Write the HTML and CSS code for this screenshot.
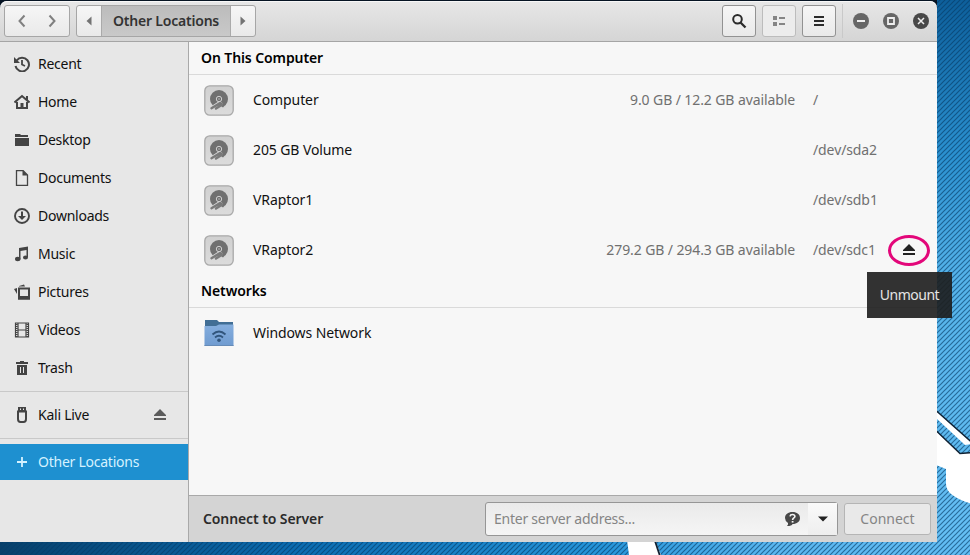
FILE: index.html
```html
<!DOCTYPE html>
<html lang="en">
<head>
<meta charset="utf-8">
<title>Other Locations</title>
<link rel="stylesheet" href="styles.css">
</head>
<body>
<svg class="wallpaper" width="970" height="555" viewBox="0 0 970 555" aria-hidden="true">
  <defs>
    <linearGradient id="side" x1="0" y1="0" x2="0" y2="1"><stop offset="0" stop-color="#0d5f9b"/><stop offset=".28" stop-color="#2b91d0"/><stop offset=".5" stop-color="#55b3ea"/><stop offset="1" stop-color="#66c0f5"/></linearGradient>
    <linearGradient id="base" x1="0" y1="0" x2="1" y2="0"><stop offset="0" stop-color="#07406b"/><stop offset=".3" stop-color="#0a6bb0"/><stop offset=".62" stop-color="#2595da"/><stop offset=".8" stop-color="#5ab7f0"/><stop offset="1" stop-color="#62bdf4"/></linearGradient>
    <pattern id="hatch" width="5" height="5" patternUnits="userSpaceOnUse"><path d="M-1 1L1-1M0 5L5 0M4 6L6 4" stroke="#053a66" stroke-opacity=".62" stroke-width="1.2"/></pattern>
  </defs>
  <rect x="930" width="40" height="555" fill="url(#side)"/>
  <rect y="540" width="970" height="15" fill="url(#base)"/>
  <rect width="970" height="555" fill="url(#hatch)"/>
  <rect width="937" height="8" fill="#061423"/>
  <path d="M936 411L972 443V444L965 445L936 418Z" fill="#fff"/>
  <path d="M936 410.500L972 442.500" fill="none" stroke="#123" stroke-width="1.5"/>
  <path d="M936 431L960 453.500L972 452.500V504C956 499 946 493 946 484V469L936 465Z" fill="#fff"/>
  <path d="M936 430.500L960 453.500L972 452.500" fill="none" stroke="#123" stroke-width="1.500"/>
  <path d="M627 540H655L661 555H629Z" fill="#fff"/>
  <path d="M655 541L660 556" stroke="#123" stroke-width="1.800"/>
</svg>

<svg width="0" height="0" class="defs" aria-hidden="true">
  <defs>
    <linearGradient id="metal" x1="0" y1="0" x2="0" y2="1"><stop offset="0" stop-color="#d0d0d0"/><stop offset="1" stop-color="#dcdcdc"/></linearGradient>
    <linearGradient id="blue" x1="0" y1="0" x2="0" y2="1"><stop offset="0" stop-color="#85aede"/><stop offset="1" stop-color="#6f9bd0"/></linearGradient>
    <symbol id="drive" viewBox="0 0 30 31">
      <rect x=".8" y=".8" width="28.4" height="29.4" rx="5" fill="url(#metal)" stroke="#a9a9a9" stroke-width="1.3"/>
      <circle cx="15" cy="14" r="9" fill="#707070"/>
      <path d="M6 22L16 15.500L22 22L12 25Z" fill="#d5d5d5"/>
      <path d="M11 20.500L16 17.500Q21 19.500 22.500 18.500L19 22.500L17 21Z" fill="#707070"/>
      <path d="M7.500 23.200L16.500 17.800M12 23.500L18 19.800" stroke="#7a7a7a" stroke-width="2.400" stroke-linecap="round"/>
      <circle cx="15" cy="14" r="2.700" fill="#707070" stroke="#d0d0d0" stroke-width="1"/>
      <circle cx="15" cy="14" r=".7" fill="#d0d0d0"/>
    </symbol>
    <symbol id="eject" viewBox="0 0 14 12"><path d="M7 0L13 6V7H1V6ZM1 9H13V11H1Z" fill="currentColor"/></symbol>
  </defs>
</svg>

<main class="window">
  <header class="bar">
    <div class="group nav">
      <button><svg width="16" height="16"><path d="M10.500 2.500L5.500 8L10.500 13.500" fill="none" stroke="#808080" stroke-width="2"/></svg></button>
      <button><svg width="16" height="16"><path d="M5.500 2.500L10.500 8L5.500 13.500" fill="none" stroke="#808080" stroke-width="2"/></svg></button>
    </div>
    <div class="group path">
      <button class="arrow"><svg width="8" height="10"><path d="M6.500 .5V9.500L1.500 5Z" fill="#737373"/></svg></button>
      <button class="crumb"><span>Other Locations</span></button>
      <button class="arrow"><svg width="8" height="10"><path d="M1.500 .5V9.500L6.500 5Z" fill="#737373"/></svg></button>
    </div>
    <div class="actions">
      <button class="tool"><svg width="16" height="16"><circle cx="6.500" cy="6.300" r="4.300" fill="none" stroke="#2b2b2b" stroke-width="2"/><path d="M9.500 9.500L14.500 14.500" stroke="#2b2b2b" stroke-width="2.300"/></svg></button>
      <button class="tool off"><svg width="16" height="16"><path d="M2 3H6V7H2ZM2 9H6V13H2ZM8 4H14V6H8ZM8 10H14V12H8Z" fill="#858585"/></svg></button>
      <button class="tool"><svg width="16" height="16"><path d="M3 3H13V5H3ZM3 7H13V9H3ZM3 11H13V13H3Z" fill="#2b2b2b"/></svg></button>
      <i class="split"></i>
      <div class="controls">
        <svg width="16" height="16"><circle cx="8" cy="8" r="8" fill="#666"/><path d="M4 8H12" stroke="#eee" stroke-width="2"/></svg>
        <svg width="16" height="16"><circle cx="8" cy="8" r="8" fill="#666"/><path d="M5 5H11V11H5Z" fill="none" stroke="#eee" stroke-width="1.800"/></svg>
        <svg width="16" height="16"><circle cx="8" cy="8" r="8" fill="#484848"/><path d="M5 5L11 11M11 5L5 11" stroke="#eee" stroke-width="1.500"/></svg>
      </div>
    </div>
  </header>
  <div class="body">
    <nav class="sidebar">
      <a><svg width="16" height="16"><path d="M2.700 4.500A6.800 6.800 0 1 1 1.500 10" fill="none" stroke="#444" stroke-width="2"/><path d="M0 1V7H6L4 5L3 4Z" fill="#444"/><path d="M8 4V8.500L11 10" fill="none" stroke="#444" stroke-width="1.800"/></svg><span>Recent</span></a>
      <a><svg width="16" height="16"><path d="M.5 8.500L8 2L15.500 8.500M3 8V14H13V8" fill="none" stroke="#444" stroke-width="2"/><path d="M6.500 9H9.500V15H6.500ZM12 2H14V7L12 5Z" fill="#444"/></svg><span>Home</span></a>
      <a><svg width="16" height="16"><path d="M1 2H6L7 3H14V5H1ZM1 6H15V14H1Z" fill="#444"/></svg><span>Desktop</span></a>
      <a><svg width="16" height="16"><path d="M2.500 .5H9L13.500 5V15.500H2.500Z" fill="none" stroke="#444" stroke-width="1.300"/><path d="M8.500 0L14 5.500H8.500Z" fill="#444"/></svg><span>Documents</span></a>
      <a><svg width="16" height="16"><circle cx="8" cy="8" r="7" fill="none" stroke="#444" stroke-width="1.900"/><path d="M7 3.500H9V8H12L8 12L4 8H7Z" fill="#444"/></svg><span>Downloads</span></a>
      <a><svg width="16" height="16"><path d="M5 2L14 .5V11H12.500V4L6.500 5V13.500H5Z" fill="#444"/><ellipse cx="3.700" cy="13" rx="2.700" ry="2.200" fill="#444"/><ellipse cx="11.500" cy="11.500" rx="2.500" ry="2.100" fill="#444"/></svg><span>Music</span></a>
      <a><svg width="16" height="16"><path d="M5 4.500H15V14.500H5Z" fill="none" stroke="#444" stroke-width="2"/><path d="M4 12H16V15.500H4ZM5 2L10 .5L11 2.500H5ZM3 4V10L0 5Z" fill="#444"/></svg><span>Pictures</span></a>
      <a><svg width="16" height="16"><path d="M1.500 1H14.500V15H1.500ZM4 1V15M12 1V15M4 8H12" fill="none" stroke="#444" stroke-width="1.200"/><path d="M2.800 2V15M13.200 2V15" stroke="#444" stroke-width="1.800" stroke-dasharray="1 1"/></svg><span>Videos</span></a>
      <a><svg width="16" height="16"><path fill-rule="evenodd" d="M2 2H6V1H10V2H14V4H2ZM3 5H13V15H3ZM6 7V13H7V7ZM9 7V13H10V7Z" fill="#444"/></svg><span>Trash</span></a>
      <hr>
      <a class="kali"><svg width="16" height="16"><path d="M4 4.500H12V12Q12 15 9.500 15H6.500Q4 15 4 12Z" fill="none" stroke="#444" stroke-width="2"/><path fill-rule="evenodd" d="M4 0H12V5H4ZM6 1.500V3H7V1.500ZM9 1.500V3H10V1.500Z" fill="#444"/></svg><span>Kali Live</span><svg class="out" width="14" height="12"><use href="#eject"/></svg></a>
      <hr>
      <a class="active"><svg width="16" height="16"><path d="M8 3V13M3 8H13" stroke="#d5f2ff" stroke-width="1.800"/></svg><span>Other Locations</span></a>
    </nav>
    <section class="content">
      <h2><span>On This Computer</span></h2>
      <div class="row"><svg class="pic" width="30" height="31"><use href="#drive"/></svg><span class="name">Computer</span><span class="space">9.0 GB / 12.2 GB available</span><span class="mount">/</span></div>
      <div class="row"><svg class="pic" width="30" height="31"><use href="#drive"/></svg><span class="name">205 GB Volume</span><span class="space"></span><span class="mount">/dev/sda2</span></div>
      <div class="row"><svg class="pic" width="30" height="31"><use href="#drive"/></svg><span class="name">VRaptor1</span><span class="space"></span><span class="mount">/dev/sdb1</span></div>
      <div class="row"><svg class="pic" width="30" height="31"><use href="#drive"/></svg><span class="name">VRaptor2</span><span class="space">279.2 GB / 294.3 GB available</span><span class="mount">/dev/sdc1</span>
        <div class="unmount"><svg width="14" height="12"><use href="#eject"/></svg><div class="tooltip"><span>Unmount</span></div></div>
      </div>
      <h2><span>Networks</span></h2>
      <div class="row"><svg class="pic" width="30" height="27" viewBox="0 0 30 27"><path d="M1 0H13L15 2H29V8H1Z" fill="#416e95"/><path d="M.5 6H12L15 4.500H29.500V26H.5Z" fill="url(#blue)"/><path d="M.5 25.500H29.500" stroke="#668bb7"/><path d="M8.500 14.500Q15 8.500 21.500 14.500M11 17.500Q15 14 19 17.500" fill="none" stroke="#31557c" stroke-width="1.800"/><circle cx="15" cy="20.300" r="1.800" fill="#31557c"/></svg><span class="name">Windows Network</span></div>
      <footer>
        <strong>Connect to Server</strong>
        <div class="entry"><span>Enter server address...</span><svg width="17" height="16"><path d="M8.500 1C13 1 16 3.500 16 7S13 13 8.500 13Q8 15 3 15Q4.500 13.500 4 12Q1 10 1 7C1 3.500 4 1 8.500 1Z" fill="#484848"/><path d="M6 5.300Q6.300 3.500 8.500 3.500T10.900 5.400C10.900 7 8.600 7 8.600 9" fill="none" stroke="#f4f4f4" stroke-width="1.600"/><path d="M7.700 10H9.500V11.600H7.700Z" fill="#f4f4f4"/></svg><div class="drop"><svg width="10" height="6"><path d="M0 .5H10L5 5.500Z" fill="#222"/></svg></div></div>
        <button class="connect"><span>Connect</span></button>
      </footer>
    </section>
  </div>
</main>
</body>
</html>
```
FILE: styles.css
```css
* { box-sizing: border-box; }
body { margin: 0; width: 970px; height: 555px; overflow: hidden; font: 14px/20px "Noto Sans", "Open Sans", sans-serif; letter-spacing: -.1px; color: #111; }
.wallpaper { position: absolute; inset: 0; }
.defs { position: absolute; }
svg { display: block; flex: none; }
button { font: inherit; letter-spacing: inherit; padding: 0; margin: 0; border: 0; background: none; color: inherit; display: flex; align-items: center; justify-content: center; }
.window { position: relative; width: 937px; height: 542px; padding-top: 1px; display: flex; flex-direction: column; }
.window::before { content: ""; position: absolute; inset: 1px 0 0; z-index: -1; border-radius: 7px 7px 0 0; box-shadow: 0 1px 4px 1px rgba(0,0,0,.5); }
.bar { height: 41px; flex: none; display: flex; align-items: center; gap: 6px; padding: 0 8px 1px 4px; border-radius: 7px 7px 0 0; border-bottom: 1px solid #a5a5a5; background: linear-gradient(#e7e7e7, #d5d5d5); box-shadow: inset 0 1px #f7f7f7; }
.group, .tool { height: 32px; border: 1px solid #a6a6a6; border-radius: 3px; background: linear-gradient(#f6f6f6, #e9e9e9); }
.group { display: flex; overflow: hidden; }
.nav { width: 66px; justify-content: space-between; padding: 0 9px; }
.path { width: 180px; }
.arrow { width: 24px; }
.crumb { flex: 1; background: linear-gradient(#bcbcbc, #c9c9c9); border: 1px solid #aaa; border-width: 0 1px; font-weight: 600; letter-spacing: -.2px; color: #333; }
.actions { margin-left: auto; display: flex; align-items: center; }
.tool { width: 34px; margin-right: 6px; border-color: #929292; }
.tool.off { border-color: #bcbcbc; background: #ececec; }
.split { width: 1px; height: 34px; background: #c9c9c9; }
.controls { display: flex; gap: 14px; margin-left: 10px; }
.body { flex: 1; display: flex; min-height: 0; }
.sidebar { width: 189px; background: #e7e7e7; border-right: 1px solid #a9a9a9; padding-top: 3px; letter-spacing: -.25px; }
.sidebar a { height: 38px; display: flex; align-items: center; gap: 8px; padding-left: 14px; }
.sidebar hr { height: 1px; margin: 4px 0; border: 0; background: #c9c9c9; }
.sidebar .kali { height: 38px; }
.sidebar .active { height: 36px; margin-top: 5px; background: #1e90d0; color: #d5f2ff; }
.out { margin-left: auto; margin-right: 21px; color: #5c5c5c; }
.content { flex: 1; display: flex; flex-direction: column; background: #f7f7f7; min-width: 0; }
h2 { height: 33px; margin: 0; padding: 6px 12px; border-bottom: 1px solid #dadada; font-size: 14px; line-height: 20px; font-weight: 600; color: #000; }
.row { height: 50px; display: flex; align-items: center; padding-left: 15px; }
.pic { margin-right: 19px; }
.name { flex: 1; }
.space, .mount { color: #707070; }
.mount { width: 124px; margin-left: 18px; }
.unmount { position: relative; width: 42px; height: 31px; margin: 0 7px 0 -49px; display: flex; align-items: center; justify-content: center; border: 3px solid #e3077a; border-radius: 50%; color: #222; }
.tooltip { position: absolute; left: -24px; top: 34px; width: 85px; height: 46px; background: rgba(30,30,30,.91); color: #e5e5e5; letter-spacing: -.5px; display: flex; align-items: center; justify-content: center; }
footer { margin-top: auto; height: 47px; flex: none; background: #d4d4d4; border-top: 1px solid #a9a9a9; display: flex; align-items: center; padding: 0 6px 0 14px; }
footer strong { flex: 1; font-weight: 600; color: #2b2b2b; }
.entry { width: 353px; height: 34px; display: flex; align-items: center; padding-left: 8px; border: 1px solid #969696; border-radius: 3px; background: linear-gradient(#eaeaea, #f5f5f5); color: #858585; letter-spacing: -.25px; }
.entry > span { flex: 1; }
.drop { width: 29px; margin-left: 7px; height: 100%; display: flex; align-items: center; justify-content: center; background: linear-gradient(#fafafa, #eee); }
.connect { width: 87px; height: 32px; margin-left: 6px; border: 1px solid #b5b5b5; border-radius: 3px; background: #e9e9e9; color: #858585; letter-spacing: 0; }
```
